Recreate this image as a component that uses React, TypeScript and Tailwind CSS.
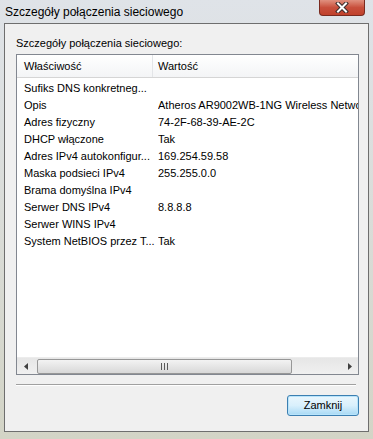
import React from 'react';

const rows: [string, string][] = [
    ['Sufiks DNS konkretneg...', ''],
    ['Opis', 'Atheros AR9002WB-1NG Wireless Network Adapter'],
    ['Adres fizyczny', '74-2F-68-39-AE-2C'],
    ['DHCP włączone', 'Tak'],
    ['Adres IPv4 autokonfigur...', '169.254.59.58'],
    ['Maska podsieci IPv4', '255.255.0.0'],
    ['Brama domyślna IPv4', ''],
    ['Serwer DNS IPv4', '8.8.8.8'],
    ['Serwer WINS IPv4', ''],
    ['System NetBIOS przez T...', 'Tak'],
];

function CloseButton() {
    return (
        <div className="w-[46px] h-[16px] mr-[8px] rounded-b-[4px] border border-t-0 border-[#7a2a1f] bg-gradient-to-b from-[#e0907f] via-[#c84f3c] to-[#c0412b] flex items-center justify-center">
            <svg width="14" height="11" viewBox="0 0 14 11">
                <path d="M3 1.5 L11 9.5 M11 1.5 L3 9.5" stroke="#3a2b2b" strokeWidth="4" strokeLinecap="square" />
                <path d="M3 1.5 L11 9.5 M11 1.5 L3 9.5" stroke="#ffffff" strokeWidth="2" strokeLinecap="square" />
            </svg>
        </div>
    );
}

function HScrollbar() {
    return (
        <div className="h-[17px] flex items-center bg-gradient-to-b from-[#e6e6e6] to-[#f0f0f0] border-t border-[#ececec]">
            <div className="w-[17px] h-full flex items-center justify-center">
                <svg width="4" height="7" viewBox="0 0 4 7">
                    <path d="M4 0 L0 3.5 L4 7 Z" fill="#404040" />
                </svg>
            </div>
            <div className="ml-[3px] w-[255px] h-[15px] rounded-[2px] border border-[#979797] bg-gradient-to-b from-[#f3f3f3] to-[#d8d8d8] flex items-center justify-center">
                <svg width="7" height="7" viewBox="0 0 7 7">
                    <path d="M0.5 0 V7 M3.5 0 V7 M6.5 0 V7" stroke="#5a5a5a" strokeWidth="1" />
                </svg>
            </div>
            <div className="flex-1" />
            <div className="w-[17px] h-full flex items-center justify-center">
                <svg width="4" height="7" viewBox="0 0 4 7">
                    <path d="M0 0 L4 3.5 L0 7 Z" fill="#404040" />
                </svg>
            </div>
        </div>
    );
}

export default function App() {
    return (
        <div
            className="w-[373px] h-[439px] flex flex-col bg-gradient-to-b from-[#dfe3e8] via-[#dadcd8] to-[#d3d4c6] overflow-hidden"
            style={{ fontFamily: '"Liberation Sans", Arial, sans-serif' }}
        >
            {/* Title bar */}
            <div className="h-[23px] flex items-start">
                <div className="pl-[5px] pt-[5px] text-[12px] leading-[14px] text-black">
                    Szczegóły połączenia sieciowego
                </div>
                <div className="flex-1" />
                <CloseButton />
            </div>

            {/* Client area */}
            <div className="mx-[4px] mb-[7px] flex-1 flex flex-col bg-[#f0f0f0] border border-[#6e6e6e] pl-[11px] pr-[9px]">
                <div className="pt-[13px] h-[30px] text-[11px] leading-[13px] text-black">
                    Szczegóły połączenia sieciowego:
                </div>

                <div className="h-[321px] flex flex-col bg-white border border-[#828790]">
                    <div className="h-[23px] flex items-stretch bg-gradient-to-b from-white to-[#f3f4f6] border-b border-[#d5d5d5] text-[11px] text-black">
                        <div className="w-[136px] pl-[7px] flex items-center border-r border-[#e3e5e8]">Właściwość</div>
                        <div className="flex-1 pl-[5px] flex items-center">Wartość</div>
                    </div>
                    <div className="flex-1 pt-[2px] overflow-hidden">
                        {rows.map(([k, v]) => (
                            <div key={k} className="h-[17px] flex items-center text-[11px] text-black whitespace-nowrap">
                                <div className="w-[141px] shrink-0 pl-[7px] overflow-hidden">{k}</div>
                                <div className="flex-1 overflow-hidden">{v}</div>
                            </div>
                        ))}
                    </div>
                    <HScrollbar />
                </div>

                <div className="mt-[9px] h-[2px] mr-[3px] border-t border-[#a0a0a0] border-b border-b-white" />

                <div className="flex justify-end mt-[9px]">
                    <div className="w-[72px] h-[21px] rounded-[3px] border border-[#3c7fb1] bg-gradient-to-b from-[#eaf6fd] via-[#d9f0fc] to-[#a7d9f5] shadow-[inset_0_0_0_1px_#b8e4fb] flex items-center justify-center text-[11px] text-black">
                        Zamknij
                    </div>
                </div>
            </div>
        </div>
    );
}
